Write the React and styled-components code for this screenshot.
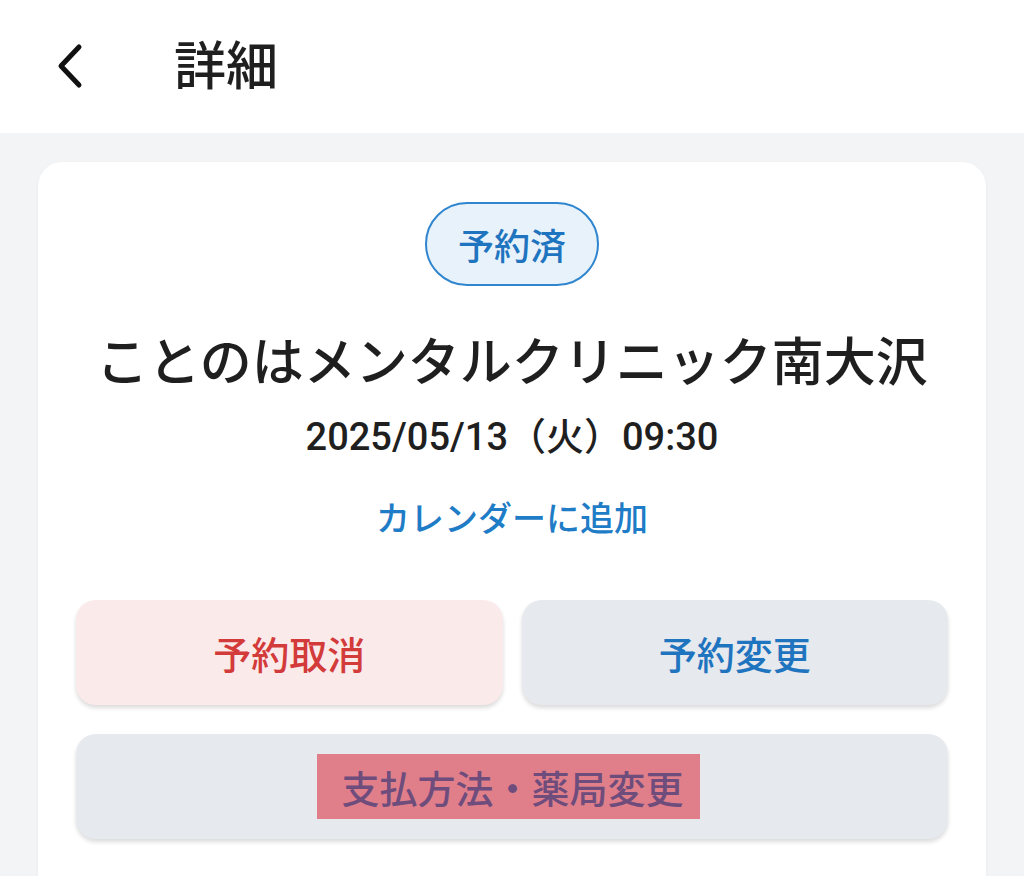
import React from "react";
import styled, { createGlobalStyle } from "styled-components";

const Global = createGlobalStyle`
  html, body { margin: 0; padding: 0; }
  body {
    background: #f3f4f6;
    font-family: Roboto, "Noto Sans CJK JP", sans-serif;
    color: #1f1f1f;
  }
`;

const Page = styled.div`
  height: 876px;
  background: #f3f4f6;
  overflow: hidden;
`;

const Header = styled.header`
  height: 133px;
  background: #ffffff;
  display: flex;
  align-items: center;
  padding: 0 0 0 50px;
  box-sizing: border-box;
`;

const BackButton = styled.button`
  width: 40px;
  height: 56px;
  border: none;
  background: transparent;
  padding: 0;
  display: flex;
  align-items: center;
  justify-content: center;
  margin-right: 84px;
  margin-top: -2px;
`;

const Title = styled.h1`
  margin: -8px 0 0;
  font-size: 52px;
  font-weight: 500;
  font-family: "Noto Sans CJK JP", sans-serif;
  color: #1f1f1f;
`;

const Main = styled.main`
  padding: 29px 38px 0;
`;

const Card = styled.section`
  background: #ffffff;
  border-radius: 24px;
  box-shadow: 0 1px 3px rgba(0, 0, 0, 0.06);
  padding: 40px 38px 60px;
  display: flex;
  flex-direction: column;
  align-items: center;
  min-height: 760px;
  box-sizing: border-box;
`;

const Badge = styled.div`
  height: 84px;
  box-sizing: border-box;
  padding: 0 31px;
  border: 2px solid #2f86cf;
  background: #e8f2fb;
  border-radius: 42px;
  display: flex;
  align-items: center;
  color: #1f74bf;
  font-size: 36px;
  font-weight: 500;
  font-family: "Noto Sans CJK JP", sans-serif;
`;

const ClinicName = styled.h2`
  margin: 36px 0 0;
  font-size: 52px;
  line-height: 74px;
  font-weight: 500;
  font-family: "Noto Sans CJK JP", sans-serif;
  color: #1f1f1f;
  white-space: nowrap;
`;

const DateText = styled.div`
  margin-top: 15px;
  font-size: 38px;
  line-height: 52px;
  font-weight: 500;
  color: #1f1f1f;
`;

const CalendarLink = styled.a`
  margin-top: 31px;
  font-size: 34px;
  line-height: 46px;
  color: #1f7cc6;
  font-weight: 500;
  text-decoration: none;
  font-family: "Noto Sans CJK JP", sans-serif;
`;

const Actions = styled.div`
  margin-top: 60px;
  width: 100%;
  display: grid;
  grid-template-columns: 1fr 1fr;
  column-gap: 19px;
  row-gap: 29px;
`;

const ActionButton = styled.button`
  grid-column: ${(p) => (p.$wide ? "1 / span 2" : "auto")};
  height: 105px;
  border: none;
  border-radius: 20px;
  background: ${(p) => (p.$danger ? "#fbeaea" : "#e6e9ed")};
  color: ${(p) => (p.$danger ? "#d33a3a" : "#1f74bf")};
  font-size: 38px;
  font-weight: 500;
  font-family: "Noto Sans CJK JP", sans-serif;
  box-shadow: 0 3px 4px rgba(0, 0, 0, 0.14);
  display: flex;
  align-items: center;
  justify-content: center;
  padding: 0;
`;

const Highlight = styled.span`
  background: #e07f8a;
  color: #6e4c7c;
  padding: 6px 16px 6px 24px;
  line-height: 53px;
  margin-left: -7px;
`;

export default function App() {
  return (
    <Page>
      <Global />
      <Header>
        <BackButton aria-label="戻る">
          <svg width="34" height="46" viewBox="0 0 34 46" fill="none">
            <path
              d="M26 4 L8 23 L26 42"
              stroke="#111"
              strokeWidth="5"
              strokeLinecap="round"
              strokeLinejoin="round"
            />
          </svg>
        </BackButton>
        <Title>詳細</Title>
      </Header>
      <Main>
        <Card>
          <Badge>予約済</Badge>
          <ClinicName>ことのはメンタルクリニック南大沢</ClinicName>
          <DateText>2025/05/13（火）09:30</DateText>
          <CalendarLink href="#">カレンダーに追加</CalendarLink>
          <Actions>
            <ActionButton $danger>予約取消</ActionButton>
            <ActionButton>予約変更</ActionButton>
            <ActionButton $wide>
              <Highlight>支払方法・薬局変更</Highlight>
            </ActionButton>
          </Actions>
        </Card>
      </Main>
    </Page>
  );
}
